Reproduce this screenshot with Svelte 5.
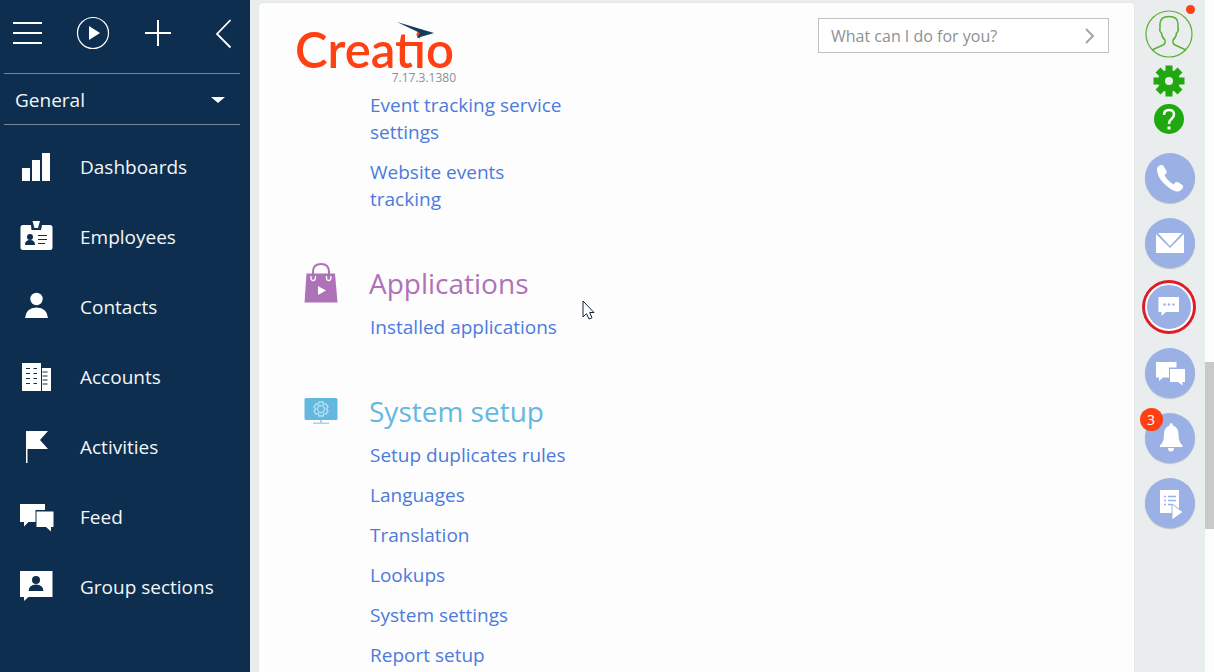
<script lang="ts">
  const sections = ['Dashboards', 'Employees', 'Contacts', 'Accounts', 'Activities', 'Feed', 'Group sections'];
  const setup = ['Setup duplicates rules', 'Languages', 'Translation', 'Lookups', 'System settings', 'Report setup'];
  let query = $state('');
</script>

<div class="app">
  <aside>
    <div class="tools">
      <button aria-label="Menu"><svg width="30" height="24"><path d="M0 2h29M0 12h29M0 22h29" stroke="#fff" stroke-width="2" /></svg></button>
      <button aria-label="Run process"><svg width="34" height="34"><circle cx="17" cy="17" r="15.5" fill="none" stroke="#fff" stroke-width="1.2" /><path d="M13 10v14l11-7z" fill="#fff" /></svg></button>
      <button aria-label="Add"><svg width="26" height="26"><path d="M0 13h26M13 0v26" stroke="#fff" stroke-width="2" /></svg></button>
      <button aria-label="Collapse panel"><svg width="17" height="32"><path d="M15.500 3L2 17l13.500 13.500" fill="none" stroke="#fff" stroke-width="1.800" /></svg></button>
    </div>
    <button class="workplace">General<svg width="16" height="8"><path d="M1 1h14L8 7z" fill="#fff" /></svg></button>
    <nav>
      {#each sections as section}
        <a href="#{section}">
          <svg width="34" height="34" viewBox="0 0 34 34" fill="#fff" aria-hidden="true">
            {#if section === 'Dashboards'}
              <path d="M2 18h8v13H2zM12 10h8v21h-8zM22 3h8v28h-8z" />
            {:else if section === 'Employees'}
              <path d="M3 5h9l2 4h5l2-4h9q2.500 0 2.500 2.500v20Q32.500 30 30 30H3Q.500 30 .500 27.500v-20Q.500 5 3 5z" />
              <path d="M12.500 1h7.500l-2 7h-3.500z" />
              <g fill="#0d2e4e"><circle cx="10" cy="17" r="3" /><path d="M5 25q0-5 5-5t5 5zM18 15h9v1h-9zM18 19h9v1h-9zM18 23h7v1h-7zM11 5h1.500l1.500 4h5l1.500-4H22l-1 5h-9.500z" /></g>
            {:else if section === 'Contacts'}
              <circle cx="16.500" cy="9" r="6.200" /><path d="M5 28q1-10.500 11.500-10.500T28 28z" />
            {:else if section === 'Accounts'}
              <path d="M2 3h19v28H2zM22 8h9v23h-9z" /><path d="M6 8.500h11M6 13.500h11M6 18.500h11M6 23.500h11" stroke="#0d2e4e" stroke-width="1.200" stroke-dasharray="4 3.500" /><path d="M22.500 12h5M22.500 16h5M22.500 20h5M22.500 24h5" stroke="#0d2e4e" />
            {:else if section === 'Activities'}
              <path d="M6 1h22l-8 9 8 9H7.500v14H6z" />
            {:else if section === 'Feed'}
              <path d="M0 4h25v6h-9.500v12H8.500L4 26.500V22H0z" /><path d="M16.500 11.500h17V27H31v4.500L26 27h-9.500z" />
            {:else}
              <path d="M0 1h32.500v26H8.500L4 31v-4H0z" /><g fill="#0d2e4e"><circle cx="16" cy="10" r="4" /><path d="M8.500 21q.5-6.500 7.500-6.500t7.500 6.500z" /></g>
            {/if}
          </svg>
          {section}
        </a>
      {/each}
    </nav>
  </aside>

  <main>
    <header>
      <div class="brand">
        <div class="word">Creatio</div>
        <svg class="wing" width="42" height="22" viewBox="0 0 42 22" aria-hidden="true"><path d="M24 9h10v10h-8.500v-3H24z" fill="#fdfdfe" /><path d="M1 0l37 11-17 5 3-5z" fill="#143c61" /></svg>
        <div class="version">7.17.3.1380</div>
      </div>
      <form class="search" onsubmit={(event) => event.preventDefault()}>
        <input bind:value={query} aria-label="What can I do for you?" placeholder="What can I do for you?" />
        <button aria-label="Search"><svg width="12" height="16"><path d="M2 1l7 7-7 7" fill="none" stroke="#a0a6a8" stroke-width="2" /></svg></button>
      </form>
    </header>

    <section class="tracking">
      <ul>
        <li><a href="#events">Event tracking service settings</a></li>
        <li><a href="#website">Website events tracking</a></li>
      </ul>
    </section>
    <section class="applications">
      <svg width="34" height="40" viewBox="0 0 34 40" aria-hidden="true">
        <path d="M2.500 10.500h28.500l2.500 29H.500z" fill="#ae72b8" /><path d="M9 16V9q0-8 8-8t8 8v7" fill="none" stroke="#ae72b8" stroke-width="2" />
        <path d="M7 13v2q0 2.500 2.200 2.500t2.200-2.500v-2M22.500 13v2q0 2.500 2.200 2.500t2.200-2.500v-2" fill="none" stroke="#fff" stroke-width="1.300" /><path d="M14 23v9l8-4.500z" fill="#fff" />
      </svg>
      <div>
        <h2>Applications</h2>
        <ul><li><a href="#installed">Installed applications</a></li></ul>
      </div>
    </section>
    <section class="system">
      <svg width="34" height="40" viewBox="0 0 34 40" aria-hidden="true">
        <rect x=".5" y="7" width="33" height="22" rx="1.500" fill="#64b8df" /><path d="M16 29h2v3h-2zM9 31.500h16V33H9z" fill="#a5d5ec" />
        <g fill="none" stroke="#b9dff0" stroke-width="1.300"><circle cx="17" cy="18" r="3.500" /><path d="M15 11h4l.7 2.500 2.300-.7 2 3.200-1.700 2 1.700 2-2 3.200-2.300-.7L19 25h-4l-.7-2.500-2.300.7-2-3.200 1.700-2-1.700-2 2-3.200 2.300.7z" /></g>
      </svg>
      <div>
        <h2>System setup</h2>
        <ul>{#each setup as item}<li><a href="#{item}">{item}</a></li>{/each}</ul>
      </div>
    </section>
  </main>

  <div class="side">
    <button class="avatar" aria-label="Profile"><svg width="48" height="48" viewBox="0 0 48 48" fill="none" stroke="#5caf35" stroke-width="1.500"><circle cx="24" cy="24" r="23" stroke-width="1.200" /><path d="M7 40l11-5q2.500-1 2-5-3.500-3-3.500-7-2.500-2-1.500-5V14q0-7.500 9-7.500t9 7.500v4q1 3-1.500 5 0 4-3.500 7-.5 4 2 5l11 5" /></svg><span class="dot"></span></button>
    <button class="gear" aria-label="Settings"><svg width="32" height="32" viewBox="0 0 32 32"><g fill="#20a90f"><circle cx="16" cy="16" r="11" />{#each [0, 45, 90, 135] as turn}<path d="M12.500 .5h7v31h-7z" transform="rotate({turn} 16 16)" />{/each}</g><circle cx="16" cy="16" r="4" fill="#e9edee" /></svg></button>
    <button class="help" aria-label="Help"><svg width="30" height="30" viewBox="0 0 30 30"><circle cx="15" cy="15" r="15" fill="#20a90f" /><path d="M10 11q0-5 5-5t5 4.500q0 2.500-2.500 4.500T15 20" fill="none" stroke="#fff" stroke-width="2.500" /><path d="M13.500 22.500h3v3h-3z" fill="#fff" /></svg></button>
    <div class="channels">
      <button aria-label="Phone"><svg viewBox="0 0 50 50" fill="#fff"><path d="M12 17q-.5-3 3.500-5 2-.5 3 1l3 5q1 2-2 4 2.500 5.500 9 9.500 2.500-3.500 5-2l4 2.500q1.500 1.500 0 3.500-2.500 3.500-6 3-6-1.500-12.500-8T12 17z" /></svg></button>
      <button aria-label="Email"><svg viewBox="0 0 50 50" fill="#fff"><path d="M13 15h24L25 28zM11 16l14 14 14-14v19H11z" /></svg></button>
      <button class="chat" aria-label="Chat"><svg viewBox="0 0 44 44" fill="#fff"><path d="M11.500 12H32v15H19l-4.500 4v-4h-3z" /><g fill="#9bb1e5"><circle cx="17.500" cy="19.500" r="1.200" /><circle cx="22" cy="19.500" r="1.200" /><circle cx="26.500" cy="19.500" r="1.200" /></g></svg></button>
      <button aria-label="Feed"><svg viewBox="0 0 50 50" fill="#fff"><path d="M11 14h20.500v5.500H24v10h-6L14 33v-3.500h-3z" /><path d="M25 21h15v13h-2.500v3.500L33 34h-8z" /></svg></button>
      <button aria-label="Notifications"><svg viewBox="0 0 50 50" fill="#fff"><path d="M26 10q2 0 2 2.500 5.500 2 5.500 8.500 0 9 4 11v2H15v-2q4-2 4-11 0-6.500 5.500-8.500 0-2.500 1.500-2.500zM23 35h6q0 3.500-3 3.500T23 35z" /></svg><span class="badge">3</span></button>
      <button aria-label="Process tasks"><svg viewBox="0 0 50 50"><path d="M15 12h19v23H15z" fill="#fff" /><path d="M19 18.500h2M23 18.500h8M19 22.500h2M23 22.500h8M19 26.500h2M23 26.500h4" stroke="#9bb1e5" stroke-width="1.300" /><path d="M27 26v16l11-8z" fill="#fff" stroke="#9bb1e5" /></svg></button>
    </div>
  </div>
  <div class="scroll"><div class="thumb"></div></div>
  <svg class="pointer" width="13" height="21" viewBox="0 0 13 21" aria-hidden="true"><path d="M1 1v16l3.500-3.300L7 19l3-1.300L7.700 12.500H12z" fill="#fff" stroke="#0d2438" /></svg>
</div>

<style>
  :global(body) { margin: 0; background: #e9edee; }
  * { box-sizing: border-box; }
  .app { display: flex; height: 100vh; overflow: hidden; position: relative; font: 19px/27px "Open Sans", sans-serif; }
  button { border: 0; padding: 0; background: none; color: inherit; font: inherit; cursor: pointer; }
  svg { display: block; flex: none; }
  a { text-decoration: none; }
  aside { width: 250px; flex: none; background: #0d2e4e; color: #f3f6f8; }
  .tools { height: 74px; margin: 0 10px 0 4px; padding: 0 0 8px 7px; display: flex; align-items: center; gap: 31px; border-bottom: 1px solid #74879a; }
  .tools button { display: grid; place-items: center; width: 34px; height: 34px; }
  .workplace { display: flex; width: 236px; height: 51px; margin-left: 4px; padding: 2px 14px 0 11px; align-items: center; justify-content: space-between; border-bottom: 1px solid #74879a; }
  nav { padding-top: 7px; }
  nav a { display: flex; align-items: center; gap: 26px; height: 70px; padding-left: 20px; color: inherit; }
  main { flex: 1; min-width: 0; margin: 3px 0 0 9px; background: #fdfdfe; border-radius: 3px 3px 0 0; box-shadow: 0 0 1px #bcc4c8; overflow: hidden; }
  header { display: flex; justify-content: space-between; align-items: flex-start; padding: 15px 25px 0 36px; height: 89px; }
  .brand { position: relative; width: 161px; }
  .word { color: #ff4013; font: 600 49px/62px Lato, sans-serif; white-space: nowrap; }
  .wing { position: absolute; left: 101px; top: 4px; }
  .version { margin-top: -11px; text-align: right; color: #8a9092; font-size: 12px; line-height: 18px; }
  .search { display: flex; align-items: center; width: 291px; height: 35px; padding: 0 12px; border: 1px solid #bfc2c4; background: #fff; }
  .search input { flex: 1; min-width: 0; border: 0; outline: 0; padding: 0; background: none; font: 16px/24px "Open Sans", sans-serif; color: #555; }
  .search input::placeholder { color: #8b9293; opacity: 1; }
  ul { list-style: none; margin: 0; padding: 0; }
  li { max-width: 204px; margin-bottom: 13px; line-height: 27px; }
  .tracking ul { padding-left: 111px; }
  .tracking { margin-bottom: 50px; }
  .applications, .system { display: flex; gap: 31px; padding-left: 45px; }
  .applications ul, .system ul { padding-left: 1px; }
  .applications { margin-bottom: 37px; }
  h2 { margin: 0 0 11px; font-size: 28px; line-height: 40px; font-weight: 400; }
  .applications h2 { color: #ae72b8; }
  .system h2 { color: #64b8df; }
  li a { color: #4b7bdc; }
  .side { width: 71px; flex: none; display: flex; flex-direction: column; align-items: center; padding: 10px 2px 0 0; }
  .avatar { position: relative; }
  .dot { position: absolute; right: -2px; top: -5px; width: 9px; height: 9px; border-radius: 50%; background: #ff4013; }
  .gear { margin-top: 7px; }
  .help { margin-top: 7px; }
  .channels { display: flex; flex-direction: column; align-items: center; gap: 15px; margin: 19px 0 0 2px; }
  .channels button { position: relative; width: 50px; height: 50px; border-radius: 50%; background: #9bb1e5; box-shadow: 0 1px 1px #b5bdc7; }
  .channels svg { width: 50px; height: 50px; }
  .channels .chat { width: 48px; height: 48px; margin: 0 2px 2px 0; border: 2px solid #fff; box-shadow: 0 0 0 3px #df1d25; }
  .channels .chat svg { width: 44px; height: 44px; }
  .badge { position: absolute; left: -5px; top: -5px; width: 23px; height: 23px; border-radius: 50%; background: #ff4013; color: #fff; font-size: 14px; line-height: 23px; text-align: center; }
  .scroll { width: 9px; flex: none; background: #fcfcfc; display: grid; grid-template-rows: 362fr 167fr 143fr; }
  .thumb { grid-row: 2; background: #c9c9c9; }
  .pointer { position: absolute; left: 582px; top: 300px; }
</style>
